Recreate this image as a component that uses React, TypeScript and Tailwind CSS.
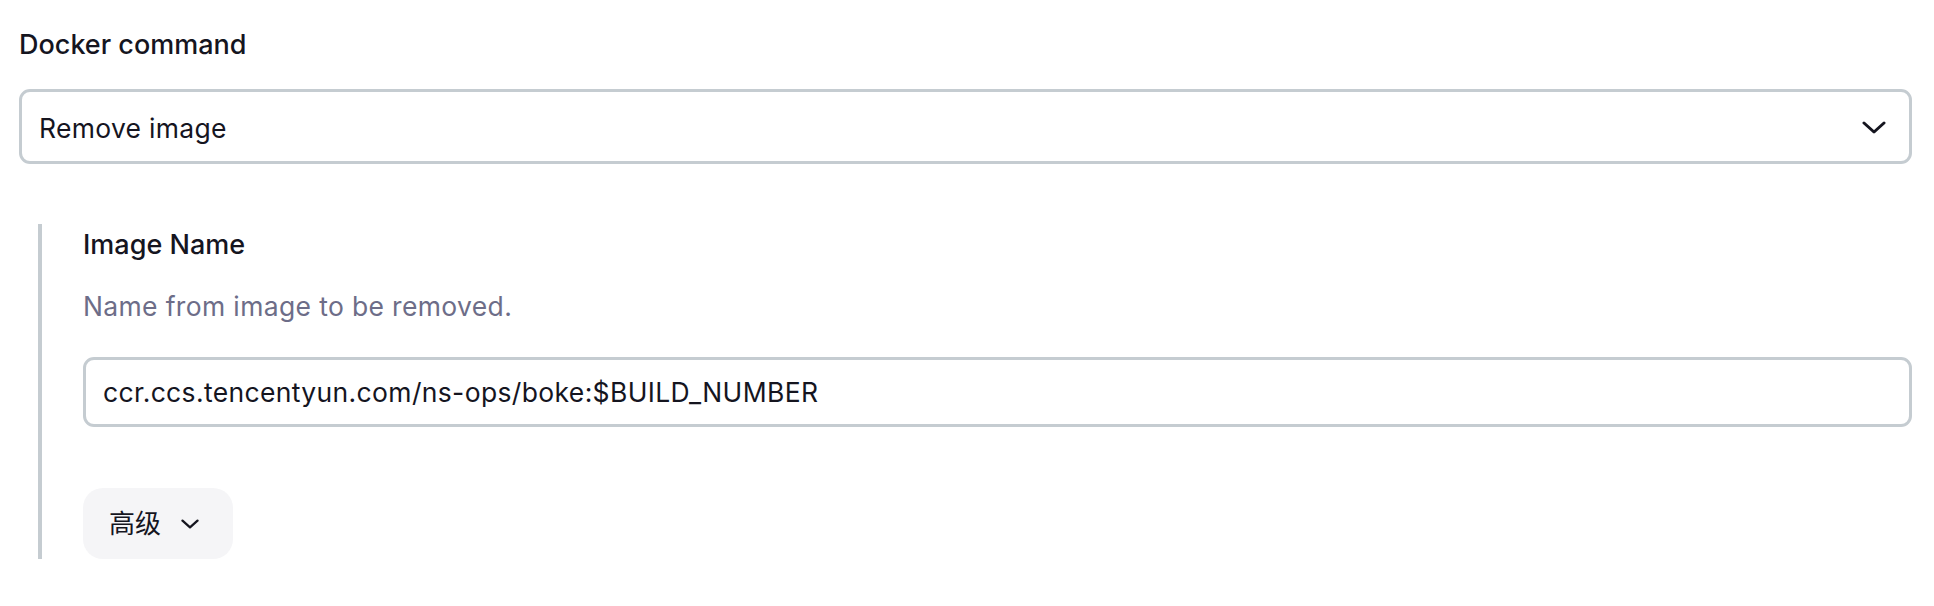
import React from 'react';

const font = { fontFamily: 'Inter, "Noto Sans CJK SC", sans-serif' };

function Chevron({ className }: { className?: string }) {
  return (
    <svg className={className} viewBox="0 0 24 13" fill="none" stroke="currentColor" strokeWidth={3} strokeLinecap="round" strokeLinejoin="round">
      <path d="M2 2l10 9 10-9" />
    </svg>
  );
}

export default function App() {
  return (
    <main className="min-h-screen bg-white text-[#15151f] pl-[19px] pr-[22px] pt-[25px]" style={font}>
      {/* Docker command */}
      <div className="text-[27px] leading-[40px] font-[480]">Docker command</div>
      <div className="mt-[24px] h-[75px] border-[3px] border-[#c5ccd1] rounded-[11px] pl-[17px] pr-[23px] pt-[16px] flex justify-between text-[26.5px] leading-[40px] tracking-[0.3px]">
        <span>Remove image</span>
        <Chevron className="w-[24px] h-[13px] mt-[13px] text-[#15151f]" />
      </div>

      {/* Nested fields */}
      <div className="mt-[60px] ml-[19px] border-l-4 border-[#c5ccd1] pl-[41px] pt-[1px]">
        <div className="text-[27px] leading-[40px] font-[480]">Image Name</div>
        <div className="mt-[21px] text-[26.5px] leading-[40px] tracking-[0.35px] text-[#6d6d88]">Name from image to be removed.</div>
        <div className="mt-[31px] h-[70px] border-[3px] border-[#c5ccd1] rounded-[11px] pl-[17px] flex items-center text-[26.5px] leading-[40px] tracking-[0.35px]">
          ccr.ccs.tencentyun.com/ns-ops/boke:$BUILD_NUMBER
        </div>
        <div className="mt-[61px] inline-flex items-center h-[71px] w-[150px] rounded-[20px] bg-[#f5f5f7] pl-[26px] text-[26px]">
          <span>高级</span>
          <Chevron className="ml-[20px] w-[18px] h-[10px] text-[#15151f]" />
        </div>
      </div>
    </main>
  );
}
